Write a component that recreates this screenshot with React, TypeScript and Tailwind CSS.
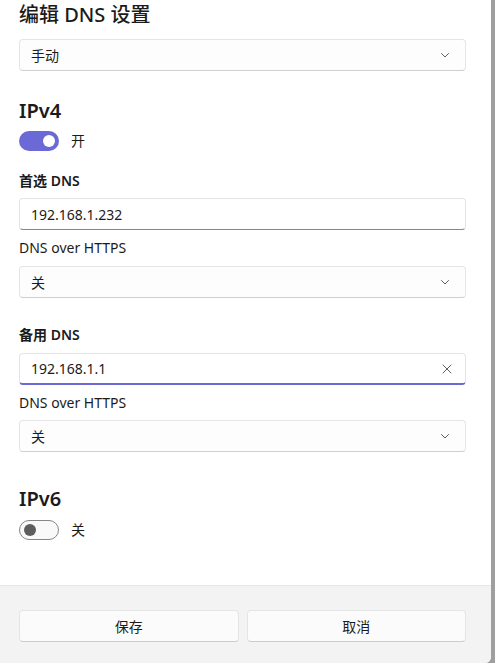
import React from 'react';

const font = { fontFamily: '"Noto Sans", "Noto Sans CJK SC", sans-serif' };

function Chevron() {
    return (
        <svg width="12" height="12" viewBox="0 0 12 12" className="text-[#5f5f5f]">
            <path d="M2.5 4.5 L6 8 L9.5 4.5" fill="none" stroke="currentColor" strokeWidth="1" strokeLinecap="round" strokeLinejoin="round" />
        </svg>
    );
}

function Select({ value }: { value: string }) {
    return (
        <div className="h-[32px] flex items-center justify-between pl-[11px] pr-[14px] rounded-[4px] border border-[#e5e5e5] border-b-[#d0d0d0] bg-[#fdfdfd] text-[14px] text-[#1b1b1b]">
            <span>{value}</span>
            <Chevron />
        </div>
    );
}

function Field({ value, focused }: { value: string; focused?: boolean }) {
    return (
        <div
            className={`h-[32px] flex items-center justify-between pl-[11px] pr-[12px] rounded-[4px] border border-[#e5e5e5] bg-white text-[14px] text-[#1b1b1b] ${
                focused ? 'border-b-2 border-b-[#6b69d6]' : 'border-b-[#868686]'
            }`}
        >
            <span>{value}</span>
            {focused && (
                <svg width="12" height="12" viewBox="0 0 12 12" className="text-[#5f5f5f]">
                    <path d="M2 2 L10 10 M10 2 L2 10" fill="none" stroke="currentColor" strokeWidth="1" strokeLinecap="round" />
                </svg>
            )}
        </div>
    );
}

function Toggle({ on, label }: { on: boolean; label: string }) {
    return (
        <div className="flex items-center gap-[12px]">
            {on ? (
                <div className="w-[40px] h-[20px] rounded-full bg-[#6b69d6] flex items-center justify-end pr-[4px]">
                    <div className="w-[12px] h-[12px] rounded-full bg-white" />
                </div>
            ) : (
                <div className="w-[40px] h-[20px] rounded-full border border-[#868686] bg-[#f9f9f9] flex items-center pl-[4px]">
                    <div className="w-[12px] h-[12px] rounded-full bg-[#5d5d5d]" />
                </div>
            )}
            <span className="text-[14px] text-[#1b1b1b]">{label}</span>
        </div>
    );
}

export default function App() {
    return (
        <div className="w-[495px] h-[663px] bg-[#9f9f9f] flex overflow-hidden" style={font}>
            <div className="w-[491px] h-[663px] bg-white flex flex-col rounded-br-[6px] overflow-hidden">
                <div className="flex-1 px-[19px] pr-[25px] flex flex-col">
                    <h1 className="text-[20px] font-medium text-[#1b1b1b] leading-[28px] mt-[1px]">编辑 DNS 设置</h1>
                    <div className="mt-[10px]">
                        <Select value="手动" />
                    </div>

                    <h2 className="text-[20px] font-semibold text-[#1b1b1b] leading-[28px] mt-[26px]">IPv4</h2>
                    <div className="mt-[5px]">
                        <Toggle on label="开" />
                    </div>

                    <div className="text-[14px] font-semibold text-[#1b1b1b] leading-[20px] mt-[20px]">首选 DNS</div>
                    <div className="mt-[7px]">
                        <Field value="192.168.1.232" />
                    </div>
                    <div className="text-[14px] text-[#1b1b1b] leading-[20px] mt-[8px]">DNS over HTTPS</div>
                    <div className="mt-[8px]">
                        <Select value="关" />
                    </div>

                    <div className="text-[14px] font-semibold text-[#1b1b1b] leading-[20px] mt-[27px]">备用 DNS</div>
                    <div className="mt-[8px]">
                        <Field value="192.168.1.1" focused />
                    </div>
                    <div className="text-[14px] text-[#1b1b1b] leading-[20px] mt-[8px]">DNS over HTTPS</div>
                    <div className="mt-[7px]">
                        <Select value="关" />
                    </div>

                    <h2 className="text-[20px] font-semibold text-[#1b1b1b] leading-[28px] mt-[33px]">IPv6</h2>
                    <div className="mt-[6px]">
                        <Toggle on={false} label="关" />
                    </div>
                </div>
                <div className="h-[78px] bg-[#f3f3f3] border-t border-[#e5e5e5] px-[19px] pr-[25px] flex items-start pt-[24px] gap-[8px]">
                    <button className="flex-1 h-[32px] rounded-[4px] border border-[#e5e5e5] border-b-[#cccccc] bg-[#fbfbfb] text-[14px] text-[#1b1b1b]">保存</button>
                    <button className="flex-1 h-[32px] rounded-[4px] border border-[#e5e5e5] border-b-[#cccccc] bg-[#fbfbfb] text-[14px] text-[#1b1b1b]">取消</button>
                </div>
            </div>
        </div>
    );
}
